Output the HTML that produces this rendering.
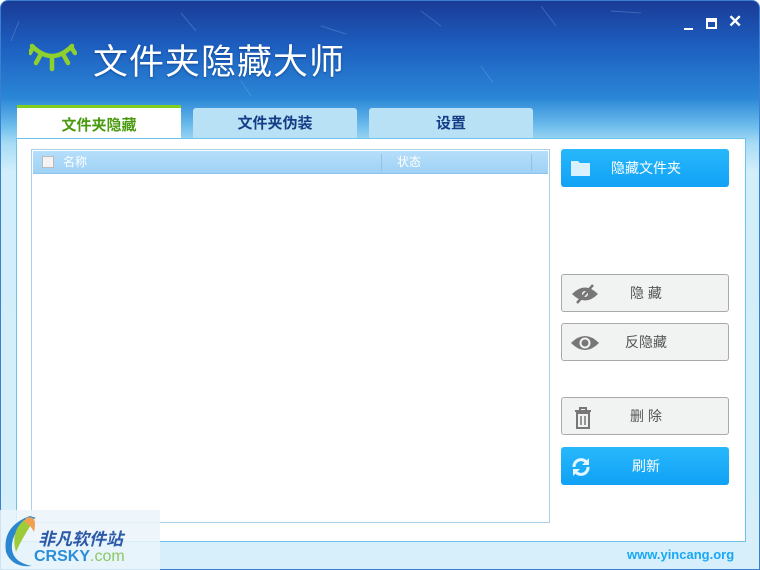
<!DOCTYPE html>
<html><head><meta charset="utf-8"><style>
*{margin:0;padding:0;box-sizing:border-box}
body{width:760px;height:570px;overflow:hidden;font-family:"Liberation Sans","Noto Sans CJK SC",sans-serif;background:#fff}
.win{position:absolute;left:0;top:0;width:760px;height:570px;border-radius:8px 8px 0 0;
background:linear-gradient(180deg,#1a3b97 0%,#1d5fc0 8%,#2a86d6 17%,#6dbdec 22%,#a6dbf5 25%,#d2eefa 30%,#d6effa 100%);border:1px solid #3a7fd0}
.title{position:absolute;left:92px;top:33px;color:#fff;font-size:35px;letter-spacing:1px;text-shadow:0 1px 2px rgba(0,40,100,.5)}
.ctl{position:absolute;top:12px;color:#fff;font-size:15px;font-weight:bold}
.tab{position:absolute;height:32px;top:107px;width:164px;background:#b8e1f6;border-radius:3px 3px 0 0;text-align:center;font-size:15px;font-weight:bold;color:#143d86;line-height:32px}
.tab.a{top:104px;height:35px;background:#fff;border-top:3px solid #7fcf1c;color:#4a9a10;line-height:36px;border-radius:0}
.panel{position:absolute;left:16px;top:138px;width:730px;height:404px;background:#fff;border:1px solid #6cc4ec}
.list{position:absolute;left:31px;top:149px;width:519px;height:374px;border:1px solid #aad0e8;background:#fff}
.hdr{position:absolute;left:1px;top:1px;width:515px;height:23px;background:linear-gradient(#b5defa,#a0d2f5);border-bottom:1px solid #8cc3ea;color:#fff;font-size:12px;line-height:23px}
.btn{position:absolute;left:561px;width:168px;height:38px;border-radius:3px;font-size:14px;line-height:38px;text-align:center;padding-left:2px}
.blue{background:linear-gradient(#27b8fb,#11a1f6);color:#fff}
.gray{background:#f1f2f2;border:1px solid #aaa;color:#555;line-height:36px}
.ic{position:absolute;left:9px;top:9px}
</style></head><body>
<div class="win">
<svg style="position:absolute;left:0;top:0" width="760" height="140"><g stroke="#8ab8ee" stroke-width="1" opacity=".3">
<line x1="180" y1="12" x2="195" y2="30"/><line x1="420" y1="10" x2="440" y2="25"/><line x1="540" y1="5" x2="555" y2="25"/><line x1="480" y1="65" x2="492" y2="82"/><line x1="320" y1="25" x2="345" y2="33"/><line x1="10" y1="40" x2="18" y2="20"/><line x1="610" y1="10" x2="640" y2="12"/><line x1="240" y1="80" x2="250" y2="95"/></g></svg>
<svg style="position:absolute;left:28px;top:40px" width="48" height="32" viewBox="0 0 48 32"><g stroke="#8fd12c" stroke-width="4.5" stroke-linecap="round" fill="none"><path d="M3 5 Q23 25 43 5"/><line x1="23" y1="16" x2="23" y2="28"/><line x1="12" y1="13" x2="7" y2="22"/><line x1="34" y1="13" x2="39" y2="22"/><line x1="4" y1="6" x2="1" y2="12"/><line x1="42" y1="6" x2="46" y2="12"/></g></svg>
<div class="title">文件夹隐藏大师</div>
<div style="position:absolute;left:683px;top:27px;width:9px;height:2px;background:#fff"></div>
<div style="position:absolute;left:705px;top:17px;width:11px;height:11px;border:2px solid #fff;border-top-width:4px"></div>
<div class="ctl" style="left:727px;top:11px;font-size:17px">✕</div>
<div class="tab a" style="left:16px">文件夹隐藏</div>
<div class="tab" style="left:192px">文件夹伪装</div>
<div class="tab" style="left:368px">设置</div>
</div>
<div class="panel"></div>
<div class="list"><div class="hdr"><span style="position:absolute;left:9px;top:5px;width:12px;height:12px;background:#f4f4f4;border:1px solid #bbb"></span><span style="position:absolute;left:30px">名称</span><span style="position:absolute;left:348px;top:3px;height:17px;border-left:1px solid #8cc3ea"></span><span style="position:absolute;left:364px">状态</span><span style="position:absolute;left:498px;top:3px;height:17px;border-left:1px solid #8cc3ea"></span></div></div>
<div class="btn blue" style="top:149px"><svg class="ic" width="22" height="20"><path d="M1 3h7l2 2h10v13H1z" fill="#d8f1fc"/></svg>隐藏文件夹</div>
<div class="btn gray" style="top:274px"><svg class="ic" width="28" height="20" viewBox="0 0 28 20"><path d="M1 10Q14 -3 27 10Q14 23 1 10z" fill="#777"/><circle cx="14" cy="10" r="3" fill="#f1f2f2"/><line x1="6" y1="19" x2="22" y2="1" stroke="#777" stroke-width="2.5"/></svg>隐 藏</div>
<div class="btn gray" style="top:323px"><svg class="ic" width="28" height="20" viewBox="0 0 28 20"><path d="M0 10Q14 -4 28 10Q14 24 0 10z" fill="#777"/><circle cx="14" cy="10" r="5.5" fill="#f1f2f2"/><circle cx="14" cy="10" r="3.5" fill="#777"/></svg>反隐藏</div>
<div class="btn gray" style="top:397px"><svg class="ic" width="22" height="22" viewBox="0 0 22 22" style="left:10px"><path d="M3 4h16M8 4V1h6v3M5 6h12v15H5z" stroke="#777" stroke-width="2" fill="none"/><path d="M9 9v9M13 9v9" stroke="#777" stroke-width="1.5"/></svg>删 除</div>
<div class="btn blue" style="top:447px"><svg class="ic" width="22" height="22" viewBox="0 0 22 22"><path d="M4 11A7 7 0 0 1 17 7M18 11A7 7 0 0 1 5 15" stroke="#e6f6fe" stroke-width="3" fill="none"/><path d="M19 2v7h-7z M3 20v-7h7z" fill="#e6f6fe"/></svg>刷新</div>
<div style="position:absolute;left:0;top:510px;width:160px;height:60px;background:rgba(235,245,252,.85)"></div>
<svg style="position:absolute;left:0;top:512px" width="50" height="58"><path d="M30 4Q2 14 6 40Q12 56 32 54Q10 50 12 32Q14 14 36 6z" fill="#2a86d0"/><path d="M24 8Q10 20 16 40Q20 30 34 8z" fill="#9ccc3a"/><path d="M26 6Q38 2 34 20Q30 12 24 10z" fill="#f0a050"/></svg>
<div style="position:absolute;left:38px;top:525px;color:#2c5aa8;font-size:17px;font-weight:bold;font-style:italic">非凡软件站</div>
<div style="position:absolute;left:34px;top:548px;color:#2a8fd8;font-size:16px;font-weight:bold">CRSKY<span style="color:#8cc860;font-weight:normal">.com</span></div>
<div style="position:absolute;left:627px;top:547px;color:#1aa8f4;font-size:13px;font-weight:bold">www.yincang.org</div>
</body></html>
